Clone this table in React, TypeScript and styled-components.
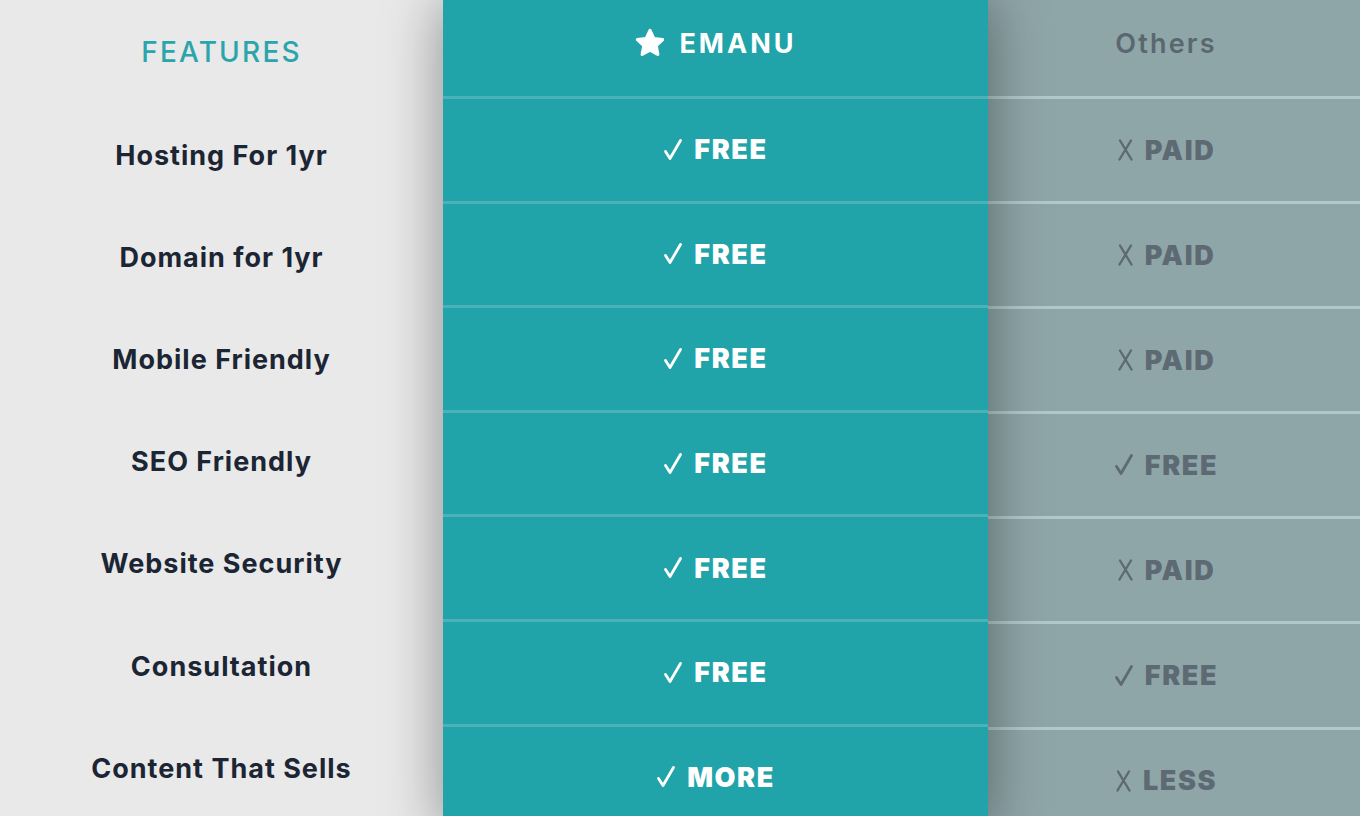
import React from "react";
import styled, { createGlobalStyle } from "styled-components";

const Global = createGlobalStyle`
  html, body { margin: 0; padding: 0; }
  body {
    width: 1360px;
    height: 816px;
    overflow: hidden;
    background: #e9e9e9;
    font-family: Inter, "Liberation Sans", sans-serif;
  }
`;

const Table = styled.div`
  display: grid;
  grid-template-columns: 443px 545px 1fr;
  height: 816px;
  overflow: hidden;
`;

const Column = styled.div<{ $bg: string; $raised?: boolean; $padRight?: number }>`
  display: flex;
  flex-direction: column;
  background: ${(p) => p.$bg};
  position: relative;
  z-index: ${(p) => (p.$raised ? 2 : 1)};
  box-shadow: ${(p) => (p.$raised ? "0 0 55px rgba(0,0,0,0.4)" : "none")};
`;

const HeadCell = styled.div<{ $h: number; $pt: number; $shift?: number }>`
  flex: 0 0 ${(p) => p.$h}px;
  box-sizing: border-box;
  display: flex;
  justify-content: center;
  align-items: flex-start;
  padding-top: ${(p) => p.$pt}px;
  padding-right: ${(p) => p.$shift ?? 0}px;
`;

const Cell = styled.div<{ $h: number; $line?: string; $shift?: number }>`
  flex: 0 0 ${(p) => p.$h}px;
  box-sizing: border-box;
  display: flex;
  justify-content: center;
  align-items: center;
  padding-right: ${(p) => p.$shift ?? 0}px;
  border-top: ${(p) => (p.$line ? `3px solid ${p.$line}` : "none")};
`;

const FeaturesTitle = styled.span`
  color: #2aa5ab;
  font-size: 28px;
  font-weight: 500;
  letter-spacing: 2.2px;
  line-height: 1;
`;

const FeatureName = styled.span`
  color: #1b2533;
  font-size: 27px;
  font-weight: 700;
  letter-spacing: 1px;
  line-height: 1;
`;

const BrandTitle = styled.span`
  display: flex;
  align-items: center;
  gap: 13px;
  color: #ffffff;
  font-size: 27px;
  font-weight: 700;
  letter-spacing: 3px;
  line-height: 1;
`;

const OthersTitle = styled.span`
  color: #5a6770;
  font-size: 27px;
  font-weight: 600;
  letter-spacing: 2.2px;
  line-height: 1;
`;

const Value = styled.span<{ $color: string }>`
  display: flex;
  align-items: center;
  gap: 11px;
  color: ${(p) => p.$color};
  font-size: 27px;
  font-weight: 900;
  letter-spacing: 1.6px;
  line-height: 1;
`;

const Check = ({ color }: { color: string }) => (
  <svg width="20" height="24" viewBox="0 0 20 24" fill="none">
    <path
      d="M2.5 13.5 L7 20.5 L17.5 2.5"
      stroke={color}
      strokeWidth="2.8"
      strokeLinecap="round"
      strokeLinejoin="round"
    />
  </svg>
);

const Cross = ({ color }: { color: string }) => (
  <svg width="17" height="24" viewBox="0 0 17 24" fill="none">
    <path
      d="M3 2.5 L14.5 21.5 M14 2.5 L2.5 21.5"
      stroke={color}
      strokeWidth="2.4"
      strokeLinecap="round"
    />
  </svg>
);

const Star = () => (
  <svg width="32" height="30" viewBox="0 0 32 30">
    <path
      d="M16 2.5 L19.9 10.6 L28.6 11.7 L22.2 17.7 L23.8 26.4 L16 22.1 L8.2 26.4 L9.8 17.7 L3.4 11.7 L12.1 10.6 Z"
      fill="#ffffff"
      stroke="#ffffff"
      strokeWidth="3.2"
      strokeLinejoin="round"
    />
  </svg>
);

const features = [
  "Hosting For 1yr",
  "Domain for 1yr",
  "Mobile Friendly",
  "SEO Friendly",
  "Website Security",
  "Consultation",
  "Content That Sells",
];

const emanu = ["FREE", "FREE", "FREE", "FREE", "FREE", "FREE", "MORE"];

const others: { ok: boolean; label: string }[] = [
  { ok: false, label: "PAID" },
  { ok: false, label: "PAID" },
  { ok: false, label: "PAID" },
  { ok: true, label: "FREE" },
  { ok: false, label: "PAID" },
  { ok: true, label: "FREE" },
  { ok: false, label: "LESS" },
];

const GRAY = "#5e6a73";

export default function App() {
  return (
    <>
      <Global />
      <Table>
        <Column $bg="#e9e9e9">
          <HeadCell $h={104} $pt={38}>
            <FeaturesTitle>FEATURES</FeaturesTitle>
          </HeadCell>
          {features.map((f) => (
            <Cell key={f} $h={102.2}>
              <FeatureName>{f}</FeatureName>
            </Cell>
          ))}
        </Column>
        <Column $bg="#20a3a9" $raised>
          <HeadCell $h={96} $pt={28}>
            <BrandTitle>
              <Star />
              EMANU
            </BrandTitle>
          </HeadCell>
          {emanu.map((v, i) => (
            <Cell key={i} $h={104.6} $line="#4bb3b8">
              <Value $color="#ffffff">
                <Check color="#ffffff" />
                {v}
              </Value>
            </Cell>
          ))}
        </Column>
        <Column $bg="#8fa6a9">
          <HeadCell $h={96} $pt={30} $shift={16}>
            <OthersTitle>Others</OthersTitle>
          </HeadCell>
          {others.map((o, i) => (
            <Cell key={i} $h={105.1} $line="#b2c9cc" $shift={16}>
              <Value $color={GRAY}>
                {o.ok ? <Check color={GRAY} /> : <Cross color={GRAY} />}
                {o.label}
              </Value>
            </Cell>
          ))}
        </Column>
      </Table>
    </>
  );
}
